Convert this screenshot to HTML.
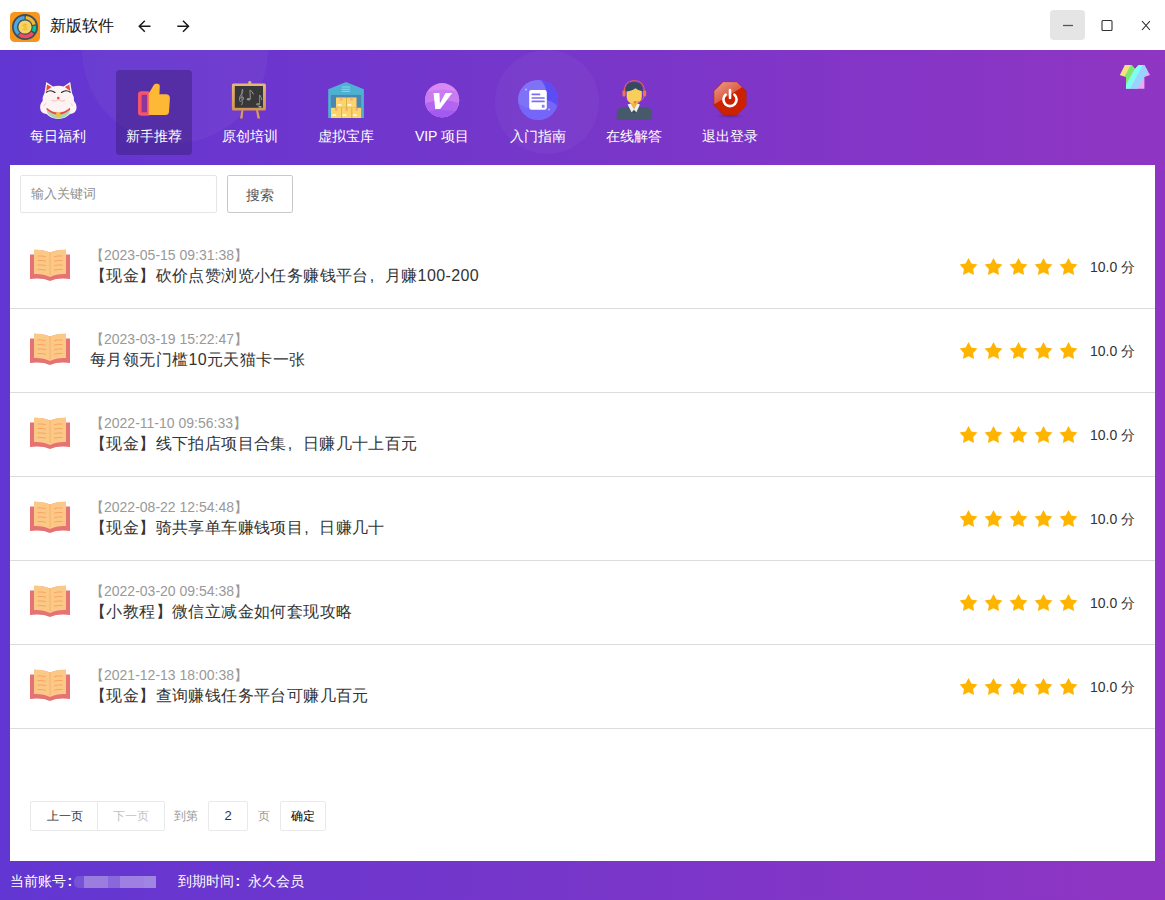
<!DOCTYPE html><html><head><meta charset="utf-8"><style>
*{box-sizing:border-box;margin:0;padding:0}
html,body{width:1165px;height:900px;overflow:hidden;background:#fff;font-family:"Liberation Sans",sans-serif}
#title{position:absolute;left:0;top:0;width:1165px;height:50px;background:#fff}
#logo{position:absolute;left:10px;top:12px;width:30px;height:30px}
#apptitle{position:absolute;left:50px;top:16px;font-size:16px;color:#111;line-height:20px}
.arrow{position:absolute;top:18px;width:16px;height:16px}
#minbtn{position:absolute;left:1050px;top:10px;width:35px;height:30px;background:#e5e5e5;border-radius:4px}
#bg{position:absolute;left:0;top:50px;width:1165px;height:850px;background:linear-gradient(90deg,#6236d2 0%,#7a36c9 55%,#9035c3 100%);overflow:hidden}
#bg div{position:absolute;border-radius:50%;background:rgba(255,255,255,0.035)}
.c1{left:82px;top:-93px;width:186px;height:186px}
.c2{left:495px;top:0px;width:104px;height:104px}
#skin{position:absolute;left:1120px;top:65px}
.nav{position:absolute;top:70px;width:76px;height:85px;border-radius:4px;color:#fff;font-size:14px;text-align:center;font-weight:500}
.nav.active{background:rgba(40,20,90,0.35)}
.nav svg{position:absolute;left:18px;top:10px;width:40px;height:40px;overflow:visible}
.nav span{position:absolute;left:-10px;right:-10px;top:57px;line-height:18px;white-space:nowrap}
#panel{position:absolute;left:10px;top:165px;width:1145px;height:696px;background:#fff}
#search{position:absolute;left:10px;top:10px;width:197px;height:38px;border:1px solid #e6e6e6;border-radius:2px;font-size:13px;color:#8f8f8f;padding-left:10px;line-height:36px}
#sbtn{position:absolute;left:217px;top:10px;width:66px;height:38px;border:1px solid #c9c9c9;border-radius:2px;font-size:14px;color:#555;text-align:center;line-height:38px}
.row{position:absolute;left:0;width:1145px;height:84px;border-bottom:1px solid #dcdcdc}
.book{position:absolute;left:20px;top:24px;width:40px;height:32px}
.date{position:absolute;left:80px;top:21px;font-size:14px;color:#999;line-height:18px;white-space:nowrap}
.ttl{position:absolute;left:80px;top:40px;font-size:16px;color:#333;line-height:22px;white-space:nowrap;letter-spacing:0.4px}
.stars{position:absolute;left:949px;top:33px;overflow:visible}
.score{position:absolute;left:1080px;top:32px;font-size:14px;color:#333;line-height:20px}
.pb{position:absolute;height:30px;border:1px solid #e9e9e9;border-radius:2px;text-align:center;line-height:28px;background:#fff;font-size:12px;color:#333}
.pt{position:absolute;height:30px;font-size:12px;color:#999;line-height:30px;white-space:nowrap}
#pager{position:absolute;left:0;top:636px;width:400px;height:30px}
.ft{position:absolute;top:872px;font-size:14px;color:#fff;line-height:18px;font-weight:500;white-space:nowrap}
.co{display:inline-block;width:14px;padding-left:1.5px;font-weight:bold}
.cm{display:inline-block;width:16px;padding-left:1px}
#blur{position:absolute;left:74px;top:876px;width:82px;height:12px}
#blur i{position:absolute;top:0;height:12px}

</style></head><body>
<div id="title">
 <svg id="logo" viewBox="0 0 30 30"><rect width="30" height="30" rx="4.5" fill="#f8951d"/><circle cx="15" cy="15" r="13" fill="#3f4d5c"/>
 <path d="M14.5 5.6 A9.4 9.4 0 0 0 8.4 21.8" fill="none" stroke="#4ea6dc" stroke-width="3.4"/>
 <path d="M15.8 5.6 A9.4 9.4 0 0 1 24.1 12.6" fill="none" stroke="#f3b933" stroke-width="3.4"/>
 <path d="M24.4 13.8 A9.4 9.4 0 0 1 23.5 19.4" fill="none" stroke="#00c896" stroke-width="3.4"/>
 <path d="M22.6 20.9 A9.4 9.4 0 0 1 9.2 22.4" fill="none" stroke="#ef4c64" stroke-width="3.4"/>
 <circle cx="15" cy="15" r="6.6" fill="#f6d365"/>
 <text x="15" y="18.3" font-size="9" text-anchor="middle" fill="#f0b429" font-family="Liberation Sans">$</text>
 </svg>
 <div id="apptitle">新版软件</div>
 <svg class="arrow" style="left:137px" viewBox="0 0 16 16"><path d="M13.5 8.2H2.5M7.8 2.7L2.3 8.2L7.8 13.7" fill="none" stroke="#1a1a1a" stroke-width="1.5"/></svg>
 <svg class="arrow" style="left:175px" viewBox="0 0 16 16"><path d="M2.3 8.2H13.3M8 2.7L13.5 8.2L8 13.7" fill="none" stroke="#1a1a1a" stroke-width="1.5"/></svg>
 <div id="minbtn"></div>
 <svg style="position:absolute;left:1060px;top:15px" width="90" height="20" viewBox="0 0 90 20">
  <path d="M3 10.5H13" stroke="#555" stroke-width="1.3"/>
  <rect x="42" y="5.5" width="10" height="10" rx="1" fill="none" stroke="#333" stroke-width="1.1"/>
  <path d="M82 6L90 15M90 6L82 15" stroke="#222" stroke-width="1.1"/>
 </svg>
</div>
<div id="bg"><div class="c1"></div><div class="c2"></div></div>
<svg id="skin" viewBox="0 0 30 24" width="30" height="24">
 <defs><clipPath id="sk"><path d="M5 0 H11.8 L15 4 L18.5 0 H24.4 L30 10 L24.4 12 V23.8 H6 V12 L0 10Z"/></clipPath></defs>
 <g clip-path="url(#sk)"><rect width="30" height="24" fill="#efa6f0"/><path d="M-20 0 L11 0 L-2.2 24 L-33.2 24Z" fill="#f3e27a"/><path d="M11 0 L16.9 0 L3.7 24 L-2.2 24Z" fill="#7be96e"/><path d="M16.9 0 L23.1 0 L9.9 24 L3.7 24Z" fill="#7ffff0"/><path d="M23.1 0 L30.9 0 L17.7 24 L9.9 24Z" fill="#98d4ff"/></g>
</svg>
<div class="nav" style="left:20px"><svg viewBox="0 0 40 40">
<path d="M6.5 13 L8.2 2 L15 6.5 Q20.3 5.2 25.6 6.5 L32.2 2 L34 13 Q36.5 17 36 21 Q39 24 38.4 29 Q37.5 33.5 32 34 Q27 39 20.3 38.9 Q13.5 39 8.5 34 Q3 33.5 2.3 29 Q1.5 24 4.6 21 Q4 17 6.5 13Z" fill="#fdf3f3"/>
<path d="M9 4.5 L8.2 11 L13.6 7Z M31.3 4.5 L32.2 11 L26.8 7Z" fill="#e9483f"/>
<path d="M8.3 12.2 Q12.5 9.2 17 12.4 M23.5 12.4 Q28 9.2 32.3 12.2" fill="none" stroke="#222" stroke-width="1.2" stroke-linecap="round"/>
<circle cx="20.3" cy="18" r="1.3" fill="#e9483f"/>
<path d="M13.5 20.3 Q17 22.5 20.3 19.5 Q23.5 22.5 27 20.3" fill="none" stroke="#ef9a9a" stroke-width="0.6"/>
<path d="M6 26 Q6.5 24 8 23.3 M34.5 26 Q34 24 32.5 23.3" fill="none" stroke="#f1a4a4" stroke-width="0.6"/>
<path d="M8.5 29.5 Q20.3 40 32.2 29.5 L31 33.5 Q26 38.8 20.3 38.8 Q14.5 38.8 9.5 33.5Z" fill="#a8d8b0"/>
<path d="M8.7 27.8 Q20.3 37.5 32 27.8 L32.2 29.5 Q20.3 40 8.5 29.5Z" fill="#e84a3f"/>
<circle cx="20.3" cy="34.7" r="2.4" fill="#f5c02a"/>
</svg><span>每日福利</span></div>
<div class="nav active" style="left:116px"><svg viewBox="0 0 40 40">
<rect x="5.8" y="13" width="9" height="21" rx="1.5" fill="#8e3599" stroke="#f5546a" stroke-width="3.6"/>
<path d="M14.7 13.8 L19.6 5.2 Q20.6 3.8 22.3 3.8 L23.8 3.8 Q25.9 4 25.8 6.2 L25.4 14.3 L32.5 14.3 Q36 14.8 35.9 18.5 L35 31.8 Q34.6 35 31.5 35 L14.7 34.9Z" fill="#fdb935"/>
</svg><span>新手推荐</span></div>
<div class="nav" style="left:212px"><svg viewBox="0 0 40 40">
<defs><linearGradient id="fr" x1="0" y1="0" x2="0" y2="1"><stop offset="0" stop-color="#e6b878"/><stop offset="1" stop-color="#d39452"/></linearGradient></defs>
<rect x="18.3" y="1" width="3" height="4" rx="1.2" fill="#e2b070"/>
<path d="M11.5 30 L13.3 30 L12.6 38.6 L10 38.6Z M26 30 L28 30 L30 38.6 L27.5 38.6Z" fill="#d99d58"/>
<rect x="1.9" y="3.6" width="34" height="26.9" rx="1.5" fill="url(#fr)"/>
<rect x="4.8" y="6" width="28.2" height="21.8" fill="#383838"/><g opacity="0.8">
<path d="M10.5 22 Q9 20 9.5 17.5 Q10.5 15 12 13.5 Q13.5 11 12.5 9 Q11.5 11 11.8 15 L12.3 24 Q12 25 11 24.5 M9.7 19 Q11 15.5 13.5 17.5 Q14 20 11.8 20.5" fill="none" stroke="#aaa" stroke-width="0.9"/>
<path d="M20 10 L20.3 19 M20.3 10 Q22.5 11.5 23.5 14.5" fill="none" stroke="#bbb" stroke-width="0.9"/>
<ellipse cx="18.6" cy="19.3" rx="1.8" ry="1.3" fill="#aaa"/>
<path d="M29.6 15 L29.6 24 M29.6 15 Q31.5 17 31.8 20" fill="none" stroke="#aaa" stroke-width="0.9"/>
<ellipse cx="28" cy="24.3" rx="1.8" ry="1.3" fill="#999"/>
</g><ellipse cx="30" cy="26.8" rx="1.8" ry="0.6" fill="#ddd"/>
</svg><span>原创培训</span></div>
<div class="nav" style="left:308px"><svg viewBox="0 0 40 40">
<path d="M2.2 9.2 L20 1.9 L37.9 9.2 L37.9 38.1 L2.2 38.1Z" fill="#4eb1d2"/>
<rect x="4.8" y="14.9" width="30.4" height="23.2" fill="#4a88b2"/>
<path d="M15.6 7 H24 M15.6 9.3 H24 M15.6 11.4 H24" stroke="#8fd3e8" stroke-width="1"/>
<g fill="#fdd46a">
<rect x="10" y="17.5" width="10.3" height="10.3"/><rect x="20.7" y="17.5" width="9.8" height="10.3"/>
<rect x="5" y="27.8" width="10.3" height="10.2"/><rect x="15.7" y="27.8" width="10" height="10.2"/><rect x="26.1" y="27.8" width="9" height="10.2"/>
</g>
<path d="M20.5 17.5 V27.8 M15.5 27.8 V38 M25.9 27.8 V38" stroke="#f3b92a" stroke-width="0.6"/>
<g fill="#f6aa78"><rect x="14" y="17.5" width="2.4" height="3"/><rect x="24.3" y="17.5" width="2.4" height="3"/><rect x="9" y="27.8" width="2.4" height="3"/><rect x="19.5" y="27.8" width="2.4" height="3"/><rect x="29.5" y="27.8" width="2.4" height="3"/></g>
<g fill="#fff6e2"><rect x="11.5" y="24" width="3.8" height="1.8"/><rect x="21.5" y="24" width="3.8" height="1.8"/><rect x="6.3" y="34.2" width="3.8" height="1.8"/><rect x="16.5" y="34.2" width="3.8" height="1.8"/><rect x="27" y="34.2" width="3.8" height="1.8"/></g>
</svg><span>虚拟宝库</span></div>
<div class="nav" style="left:404px"><svg viewBox="0 0 40 40">
<defs><clipPath id="vc"><circle cx="20.1" cy="20.2" r="17.1"/></clipPath></defs>
<g clip-path="url(#vc)">
<rect x="0" y="0" width="40" height="40" fill="#d98af2"/>
<path d="M0 13 Q20 6 40 13 V40 H0Z" fill="#c97cf0"/>
<path d="M0 25 Q20 15 40 25 V40 H0Z" fill="#b265f0"/>
<path d="M0 33 Q20 27 40 33 V40 H0Z" fill="#a35af0"/>
</g>
<path d="M11.6 12.9 L17.4 12.9 L17.9 23.3 L23.6 12.9 L30.2 12.9 L18.2 29 L13.2 29Z" fill="#fff"/>
</svg><span>VIP 项目</span></div>
<div class="nav" style="left:500px"><svg viewBox="0 0 40 40">
<defs><clipPath id="dc"><circle cx="20.1" cy="20" r="20"/></clipPath></defs>
<g clip-path="url(#dc)">
<rect width="40" height="40" fill="#7466fa"/>
<circle cx="36" cy="8" r="18" fill="#5b4cf6"/>
<circle cx="12" cy="12" r="16" fill="#7f72f7"/>
<circle cx="26" cy="38" r="18" fill="#7565f8"/>
</g>
<rect x="11.2" y="10" width="17.6" height="19.8" rx="2.2" fill="#fff"/>
<path d="M14.3 14.4 H21.5 M14.3 18 H26 M14.3 21.4 H26" stroke="#7b6ef6" stroke-width="1.7" stroke-linecap="round"/>
<rect x="23.8" y="24.8" width="2.8" height="3" rx="0.6" fill="#8b80f7"/>
<circle cx="8" cy="9.5" r="0.9" fill="#c9c3ff"/><circle cx="31" cy="29.5" r="0.9" fill="#c9c3ff"/>
</svg><span>入门指南</span></div>
<div class="nav" style="left:596px"><svg viewBox="0 0 40 40">
<path d="M2.2 40 L3.2 30.5 Q4 27.6 8 27.3 L32.5 27.3 Q36.8 27.6 37.3 30.5 L38.3 40Z" fill="#475a6b"/>
<path d="M16.5 19 H23.5 V25 L20 30 L16.5 25Z" fill="#f2b440"/>
<path d="M13.6 24.6 L16.6 23.6 L20 29.5 L23.4 23.6 L25.9 24.6 L22.4 32.2 L20 30.2 L17.6 32.2Z" fill="#eef0f1"/>
<path d="M19 30.5 L21 30.5 L21.5 33 L18.5 33Z" fill="#3b4a58"/>
<path d="M12.7 10 Q12.7 7.5 15 7.5 L25.5 7.5 Q27.8 7.5 27.8 10 L27.8 17 Q27.5 23.4 20.2 23.6 Q13 23.4 12.7 17Z" fill="#f9ce5a"/>
<path d="M11.5 11.5 Q11 2.2 20 2 Q29 2.3 29 11.5 Q24.5 11 21.5 8.3 Q19 10.5 12.5 11.5Z" fill="#344b5f"/>
<path d="M10 13 Q9.7 0.6 20.2 0.6 Q30.7 0.6 30.4 13" fill="none" stroke="#e8694a" stroke-width="1"/>
<rect x="8.4" y="10.2" width="3.2" height="6.4" rx="1.5" fill="#ee744c"/>
<rect x="29" y="10.2" width="3.2" height="6.4" rx="1.5" fill="#ee744c"/>
<path d="M30 16 Q29.5 21.5 22 22" fill="none" stroke="#ee744c" stroke-width="0.8"/>
<circle cx="21" cy="22.2" r="1.3" fill="#ee744c"/>
</svg><span>在线解答</span></div>
<div class="nav" style="left:692px"><svg viewBox="0 0 40 40">
<defs><linearGradient id="pg" x1="0" y1="0" x2="0.6" y2="1"><stop offset="0" stop-color="#eea08f"/><stop offset="0.5" stop-color="#dc5f48"/><stop offset="0.52" stop-color="#cc2200"/><stop offset="1" stop-color="#c62000"/></linearGradient>
<radialGradient id="ps" cx="0.5" cy="0.5" r="0.5"><stop offset="0" stop-color="#3a1a6a" stop-opacity="0.45"/><stop offset="1" stop-color="#3a1a6a" stop-opacity="0"/></radialGradient></defs>
<ellipse cx="20" cy="36" rx="15" ry="2.5" fill="url(#ps)"/>
<path d="M13.2 1.7 L26.8 1.7 L36.1 11 L36.1 25.2 L26.8 34.7 L13.2 34.7 L3.9 25.2 L3.9 11Z" fill="url(#pg)" stroke="#a01800" stroke-width="0.5"/>
<path d="M3.9 24.6 C10 24.6 16 23.5 20 21 C24 18 28 13 36.1 11.2 L36.1 25.2 L26.8 34.7 L13.2 34.7 L3.9 25.2Z" fill="#cc2200"/>
<path d="M15.6 14.6 A6.6 6.6 0 1 0 24.4 14.6" fill="none" stroke="#fff" stroke-width="2.6" stroke-linecap="round"/>
<path d="M20 10 V18" stroke="#fff" stroke-width="2.6" stroke-linecap="round"/>
</svg><span>退出登录</span></div>
<div id="panel"><div id="search">输入关键词</div><div id="sbtn">搜索</div>
<div class="row" style="top:60px"><svg class="book" viewBox="0 0 40 32">
<path d="M0 5.5 H5 V1 Q14 0.5 20 3.5 Q26 0.5 35 1 V5.5 H40 V30 Q28 28.5 20 32 Q12 28.5 0 30Z" fill="#e57373"/>
<path d="M4 0.5 Q13 0.5 20 3.5 Q27 0.5 36 0.5 V25 Q27 24.5 20 28 Q13 24.5 4 25Z" fill="#fbc886"/>
<path d="M20 4 V26" stroke="#f8a96a" stroke-width="0.8"/>
<path d="M7.5 7 Q12 6.7 16 7.7 M7.5 11.5 Q12 11.2 16 12.2 M7.5 16 Q12 15.7 16 16.7 M7.5 20.5 Q12 20.2 16 21.2 M24 7.7 Q28 6.7 32.5 7 M24 12.2 Q28 11.2 32.5 11.5 M24 16.7 Q28 15.7 32.5 16 M24 21.2 Q28 20.2 32.5 20.5" fill="none" stroke="#f8a060" stroke-width="0.9"/>
</svg><div class="date">【2023-05-15 09:31:38】</div><div class="ttl">【现金】砍价点赞浏览小任务赚钱平台<span class=cm>,</span>月赚100-200</div><svg class="stars" viewBox="0 0 120 19" width="120" height="19"><path d="M9.50,0.10 L12.35,5.58 L18.44,6.60 L14.11,11.00 L15.03,17.10 L9.50,14.35 L3.97,17.10 L4.89,11.00 L0.56,6.60 L6.65,5.58Z M34.50,0.10 L37.35,5.58 L43.44,6.60 L39.11,11.00 L40.03,17.10 L34.50,14.35 L28.97,17.10 L29.89,11.00 L25.56,6.60 L31.65,5.58Z M59.50,0.10 L62.35,5.58 L68.44,6.60 L64.11,11.00 L65.03,17.10 L59.50,14.35 L53.97,17.10 L54.89,11.00 L50.56,6.60 L56.65,5.58Z M84.50,0.10 L87.35,5.58 L93.44,6.60 L89.11,11.00 L90.03,17.10 L84.50,14.35 L78.97,17.10 L79.89,11.00 L75.56,6.60 L81.65,5.58Z M109.50,0.10 L112.35,5.58 L118.44,6.60 L114.11,11.00 L115.03,17.10 L109.50,14.35 L103.97,17.10 L104.89,11.00 L100.56,6.60 L106.65,5.58Z" fill="#ffb400"/></svg><div class="score">10.0 分</div></div>
<div class="row" style="top:144px"><svg class="book" viewBox="0 0 40 32">
<path d="M0 5.5 H5 V1 Q14 0.5 20 3.5 Q26 0.5 35 1 V5.5 H40 V30 Q28 28.5 20 32 Q12 28.5 0 30Z" fill="#e57373"/>
<path d="M4 0.5 Q13 0.5 20 3.5 Q27 0.5 36 0.5 V25 Q27 24.5 20 28 Q13 24.5 4 25Z" fill="#fbc886"/>
<path d="M20 4 V26" stroke="#f8a96a" stroke-width="0.8"/>
<path d="M7.5 7 Q12 6.7 16 7.7 M7.5 11.5 Q12 11.2 16 12.2 M7.5 16 Q12 15.7 16 16.7 M7.5 20.5 Q12 20.2 16 21.2 M24 7.7 Q28 6.7 32.5 7 M24 12.2 Q28 11.2 32.5 11.5 M24 16.7 Q28 15.7 32.5 16 M24 21.2 Q28 20.2 32.5 20.5" fill="none" stroke="#f8a060" stroke-width="0.9"/>
</svg><div class="date">【2023-03-19 15:22:47】</div><div class="ttl">每月领无门槛10元天猫卡一张</div><svg class="stars" viewBox="0 0 120 19" width="120" height="19"><path d="M9.50,0.10 L12.35,5.58 L18.44,6.60 L14.11,11.00 L15.03,17.10 L9.50,14.35 L3.97,17.10 L4.89,11.00 L0.56,6.60 L6.65,5.58Z M34.50,0.10 L37.35,5.58 L43.44,6.60 L39.11,11.00 L40.03,17.10 L34.50,14.35 L28.97,17.10 L29.89,11.00 L25.56,6.60 L31.65,5.58Z M59.50,0.10 L62.35,5.58 L68.44,6.60 L64.11,11.00 L65.03,17.10 L59.50,14.35 L53.97,17.10 L54.89,11.00 L50.56,6.60 L56.65,5.58Z M84.50,0.10 L87.35,5.58 L93.44,6.60 L89.11,11.00 L90.03,17.10 L84.50,14.35 L78.97,17.10 L79.89,11.00 L75.56,6.60 L81.65,5.58Z M109.50,0.10 L112.35,5.58 L118.44,6.60 L114.11,11.00 L115.03,17.10 L109.50,14.35 L103.97,17.10 L104.89,11.00 L100.56,6.60 L106.65,5.58Z" fill="#ffb400"/></svg><div class="score">10.0 分</div></div>
<div class="row" style="top:228px"><svg class="book" viewBox="0 0 40 32">
<path d="M0 5.5 H5 V1 Q14 0.5 20 3.5 Q26 0.5 35 1 V5.5 H40 V30 Q28 28.5 20 32 Q12 28.5 0 30Z" fill="#e57373"/>
<path d="M4 0.5 Q13 0.5 20 3.5 Q27 0.5 36 0.5 V25 Q27 24.5 20 28 Q13 24.5 4 25Z" fill="#fbc886"/>
<path d="M20 4 V26" stroke="#f8a96a" stroke-width="0.8"/>
<path d="M7.5 7 Q12 6.7 16 7.7 M7.5 11.5 Q12 11.2 16 12.2 M7.5 16 Q12 15.7 16 16.7 M7.5 20.5 Q12 20.2 16 21.2 M24 7.7 Q28 6.7 32.5 7 M24 12.2 Q28 11.2 32.5 11.5 M24 16.7 Q28 15.7 32.5 16 M24 21.2 Q28 20.2 32.5 20.5" fill="none" stroke="#f8a060" stroke-width="0.9"/>
</svg><div class="date">【2022-11-10 09:56:33】</div><div class="ttl">【现金】线下拍店项目合集<span class=cm>,</span>日赚几十上百元</div><svg class="stars" viewBox="0 0 120 19" width="120" height="19"><path d="M9.50,0.10 L12.35,5.58 L18.44,6.60 L14.11,11.00 L15.03,17.10 L9.50,14.35 L3.97,17.10 L4.89,11.00 L0.56,6.60 L6.65,5.58Z M34.50,0.10 L37.35,5.58 L43.44,6.60 L39.11,11.00 L40.03,17.10 L34.50,14.35 L28.97,17.10 L29.89,11.00 L25.56,6.60 L31.65,5.58Z M59.50,0.10 L62.35,5.58 L68.44,6.60 L64.11,11.00 L65.03,17.10 L59.50,14.35 L53.97,17.10 L54.89,11.00 L50.56,6.60 L56.65,5.58Z M84.50,0.10 L87.35,5.58 L93.44,6.60 L89.11,11.00 L90.03,17.10 L84.50,14.35 L78.97,17.10 L79.89,11.00 L75.56,6.60 L81.65,5.58Z M109.50,0.10 L112.35,5.58 L118.44,6.60 L114.11,11.00 L115.03,17.10 L109.50,14.35 L103.97,17.10 L104.89,11.00 L100.56,6.60 L106.65,5.58Z" fill="#ffb400"/></svg><div class="score">10.0 分</div></div>
<div class="row" style="top:312px"><svg class="book" viewBox="0 0 40 32">
<path d="M0 5.5 H5 V1 Q14 0.5 20 3.5 Q26 0.5 35 1 V5.5 H40 V30 Q28 28.5 20 32 Q12 28.5 0 30Z" fill="#e57373"/>
<path d="M4 0.5 Q13 0.5 20 3.5 Q27 0.5 36 0.5 V25 Q27 24.5 20 28 Q13 24.5 4 25Z" fill="#fbc886"/>
<path d="M20 4 V26" stroke="#f8a96a" stroke-width="0.8"/>
<path d="M7.5 7 Q12 6.7 16 7.7 M7.5 11.5 Q12 11.2 16 12.2 M7.5 16 Q12 15.7 16 16.7 M7.5 20.5 Q12 20.2 16 21.2 M24 7.7 Q28 6.7 32.5 7 M24 12.2 Q28 11.2 32.5 11.5 M24 16.7 Q28 15.7 32.5 16 M24 21.2 Q28 20.2 32.5 20.5" fill="none" stroke="#f8a060" stroke-width="0.9"/>
</svg><div class="date">【2022-08-22 12:54:48】</div><div class="ttl">【现金】骑共享单车赚钱项目<span class=cm>,</span>日赚几十</div><svg class="stars" viewBox="0 0 120 19" width="120" height="19"><path d="M9.50,0.10 L12.35,5.58 L18.44,6.60 L14.11,11.00 L15.03,17.10 L9.50,14.35 L3.97,17.10 L4.89,11.00 L0.56,6.60 L6.65,5.58Z M34.50,0.10 L37.35,5.58 L43.44,6.60 L39.11,11.00 L40.03,17.10 L34.50,14.35 L28.97,17.10 L29.89,11.00 L25.56,6.60 L31.65,5.58Z M59.50,0.10 L62.35,5.58 L68.44,6.60 L64.11,11.00 L65.03,17.10 L59.50,14.35 L53.97,17.10 L54.89,11.00 L50.56,6.60 L56.65,5.58Z M84.50,0.10 L87.35,5.58 L93.44,6.60 L89.11,11.00 L90.03,17.10 L84.50,14.35 L78.97,17.10 L79.89,11.00 L75.56,6.60 L81.65,5.58Z M109.50,0.10 L112.35,5.58 L118.44,6.60 L114.11,11.00 L115.03,17.10 L109.50,14.35 L103.97,17.10 L104.89,11.00 L100.56,6.60 L106.65,5.58Z" fill="#ffb400"/></svg><div class="score">10.0 分</div></div>
<div class="row" style="top:396px"><svg class="book" viewBox="0 0 40 32">
<path d="M0 5.5 H5 V1 Q14 0.5 20 3.5 Q26 0.5 35 1 V5.5 H40 V30 Q28 28.5 20 32 Q12 28.5 0 30Z" fill="#e57373"/>
<path d="M4 0.5 Q13 0.5 20 3.5 Q27 0.5 36 0.5 V25 Q27 24.5 20 28 Q13 24.5 4 25Z" fill="#fbc886"/>
<path d="M20 4 V26" stroke="#f8a96a" stroke-width="0.8"/>
<path d="M7.5 7 Q12 6.7 16 7.7 M7.5 11.5 Q12 11.2 16 12.2 M7.5 16 Q12 15.7 16 16.7 M7.5 20.5 Q12 20.2 16 21.2 M24 7.7 Q28 6.7 32.5 7 M24 12.2 Q28 11.2 32.5 11.5 M24 16.7 Q28 15.7 32.5 16 M24 21.2 Q28 20.2 32.5 20.5" fill="none" stroke="#f8a060" stroke-width="0.9"/>
</svg><div class="date">【2022-03-20 09:54:38】</div><div class="ttl">【小教程】微信立减金如何套现攻略</div><svg class="stars" viewBox="0 0 120 19" width="120" height="19"><path d="M9.50,0.10 L12.35,5.58 L18.44,6.60 L14.11,11.00 L15.03,17.10 L9.50,14.35 L3.97,17.10 L4.89,11.00 L0.56,6.60 L6.65,5.58Z M34.50,0.10 L37.35,5.58 L43.44,6.60 L39.11,11.00 L40.03,17.10 L34.50,14.35 L28.97,17.10 L29.89,11.00 L25.56,6.60 L31.65,5.58Z M59.50,0.10 L62.35,5.58 L68.44,6.60 L64.11,11.00 L65.03,17.10 L59.50,14.35 L53.97,17.10 L54.89,11.00 L50.56,6.60 L56.65,5.58Z M84.50,0.10 L87.35,5.58 L93.44,6.60 L89.11,11.00 L90.03,17.10 L84.50,14.35 L78.97,17.10 L79.89,11.00 L75.56,6.60 L81.65,5.58Z M109.50,0.10 L112.35,5.58 L118.44,6.60 L114.11,11.00 L115.03,17.10 L109.50,14.35 L103.97,17.10 L104.89,11.00 L100.56,6.60 L106.65,5.58Z" fill="#ffb400"/></svg><div class="score">10.0 分</div></div>
<div class="row" style="top:480px"><svg class="book" viewBox="0 0 40 32">
<path d="M0 5.5 H5 V1 Q14 0.5 20 3.5 Q26 0.5 35 1 V5.5 H40 V30 Q28 28.5 20 32 Q12 28.5 0 30Z" fill="#e57373"/>
<path d="M4 0.5 Q13 0.5 20 3.5 Q27 0.5 36 0.5 V25 Q27 24.5 20 28 Q13 24.5 4 25Z" fill="#fbc886"/>
<path d="M20 4 V26" stroke="#f8a96a" stroke-width="0.8"/>
<path d="M7.5 7 Q12 6.7 16 7.7 M7.5 11.5 Q12 11.2 16 12.2 M7.5 16 Q12 15.7 16 16.7 M7.5 20.5 Q12 20.2 16 21.2 M24 7.7 Q28 6.7 32.5 7 M24 12.2 Q28 11.2 32.5 11.5 M24 16.7 Q28 15.7 32.5 16 M24 21.2 Q28 20.2 32.5 20.5" fill="none" stroke="#f8a060" stroke-width="0.9"/>
</svg><div class="date">【2021-12-13 18:00:38】</div><div class="ttl">【现金】查询赚钱任务平台可赚几百元</div><svg class="stars" viewBox="0 0 120 19" width="120" height="19"><path d="M9.50,0.10 L12.35,5.58 L18.44,6.60 L14.11,11.00 L15.03,17.10 L9.50,14.35 L3.97,17.10 L4.89,11.00 L0.56,6.60 L6.65,5.58Z M34.50,0.10 L37.35,5.58 L43.44,6.60 L39.11,11.00 L40.03,17.10 L34.50,14.35 L28.97,17.10 L29.89,11.00 L25.56,6.60 L31.65,5.58Z M59.50,0.10 L62.35,5.58 L68.44,6.60 L64.11,11.00 L65.03,17.10 L59.50,14.35 L53.97,17.10 L54.89,11.00 L50.56,6.60 L56.65,5.58Z M84.50,0.10 L87.35,5.58 L93.44,6.60 L89.11,11.00 L90.03,17.10 L84.50,14.35 L78.97,17.10 L79.89,11.00 L75.56,6.60 L81.65,5.58Z M109.50,0.10 L112.35,5.58 L118.44,6.60 L114.11,11.00 L115.03,17.10 L109.50,14.35 L103.97,17.10 L104.89,11.00 L100.56,6.60 L106.65,5.58Z" fill="#ffb400"/></svg><div class="score">10.0 分</div></div>
<div id="pager"><div class="pb" style="left:20px;width:68px;top:0;border-right:none;border-radius:2px 0 0 2px">上一页</div>
<div class="pb" style="left:87px;width:68px;top:0;color:#c2c2c2;border-radius:0 2px 2px 0">下一页</div>
<div class="pt" style="left:164px;top:0">到第</div>
<div class="pb" style="left:198px;width:40px;top:0;color:#333;font-size:13px">2</div>
<div class="pt" style="left:248px;top:0">页</div>
<div class="pb" style="left:270px;width:46px;top:0;color:#000;font-weight:500">确定</div></div>
</div>
<div class="ft" style="left:10px">当前账号<span class="co">:</span></div>
<div id="blur"><i style="left:0;width:10px;background:#7653d6;border-radius:5px 0 0 5px"></i><i style="left:10px;width:24px;background:#9b7de0"></i><i style="left:34px;width:12px;background:#8a68dc"></i><i style="left:46px;width:24px;background:#9d80e2"></i><i style="left:70px;width:12px;background:#a085e3"></i></div>
<div class="ft" style="left:178px">到期时间<span class="co">:</span>永久会员</div>
</body></html>
